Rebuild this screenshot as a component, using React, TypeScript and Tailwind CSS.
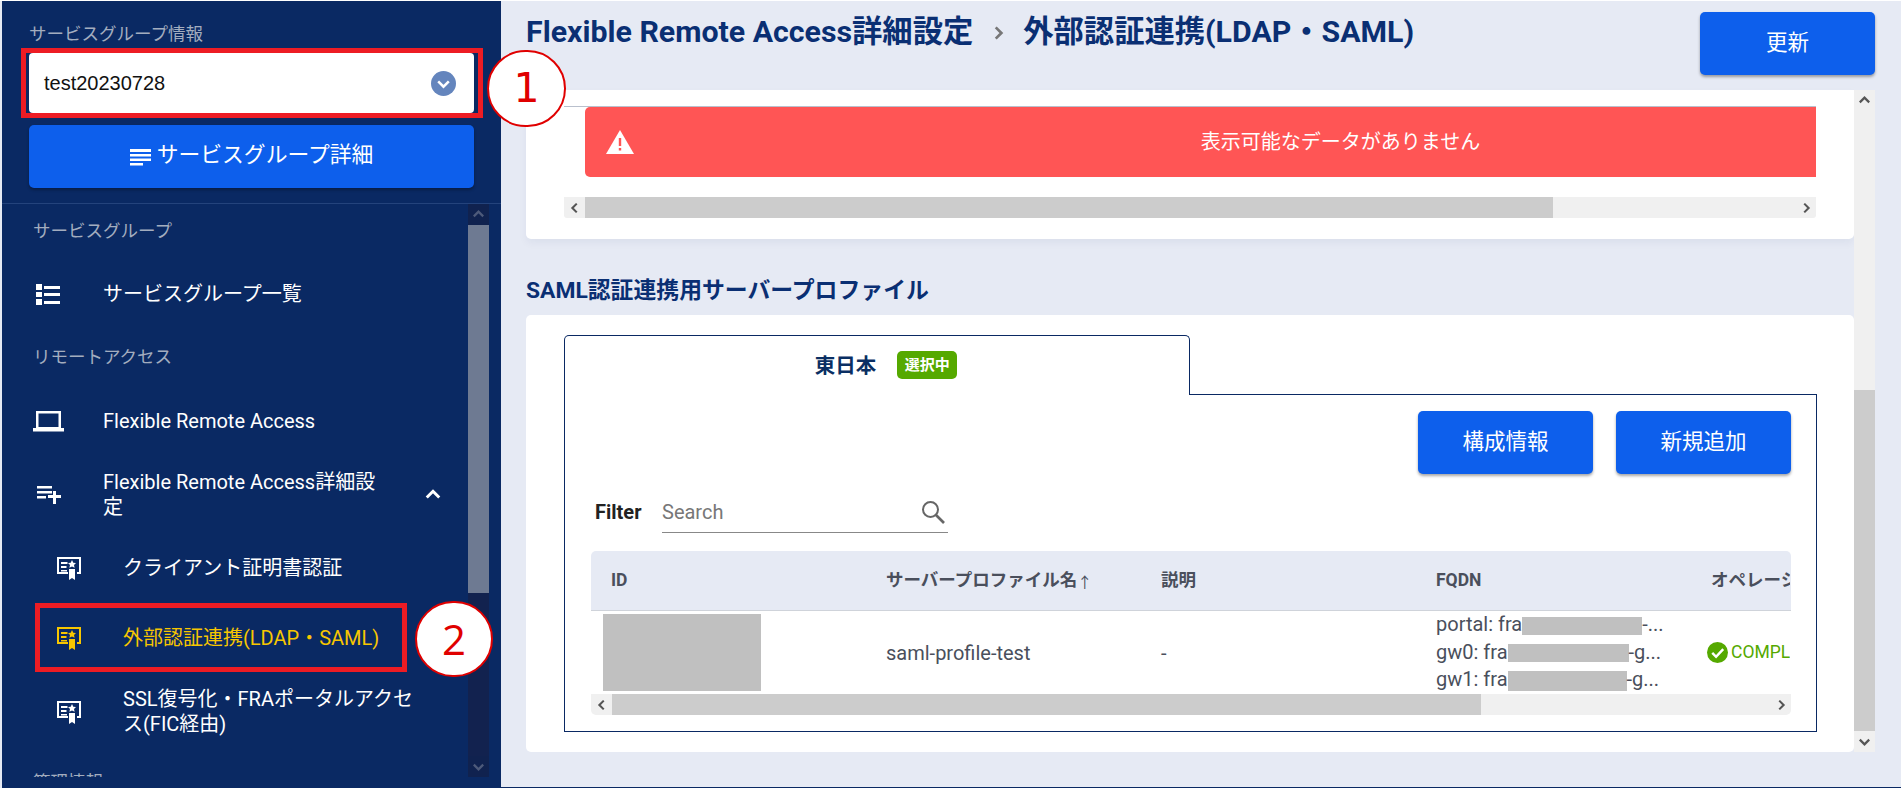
const font = "font-['Roboto','Noto_Sans_CJK_JP',sans-serif]";

const Chevron = ({ dir, className }: { dir: "up" | "down" | "left" | "right"; className: string }) => {
  const d = {
    up: "M3 10 L8 5 L13 10",
    down: "M3 6 L8 11 L13 6",
    left: "M10 3 L5 8 L10 13",
    right: "M6 3 L11 8 L6 13",
  }[dir];
  return (
    <svg viewBox="0 0 16 16" className={className} fill="none" stroke="currentColor" strokeWidth="2.4">
      <path d={d} />
    </svg>
  );
};

const CertIcon = () => (
  <svg viewBox="0 0 26 24" className="w-[26px] h-[24px] shrink-0" fill="currentColor">
    <path d="M1 1h24v17h-4v-2h2V3H3v13h9v2H1z" />
    <path d="M5 6h6.500v2H5zM5 10h5.500v2H5zM5 14h6v1.500H5z" />
    <path d="M16 4l1.300 2.700 2.700.3-2 2 .6 2.800-2.600-1.400-2.600 1.400.6-2.800-2-2 2.700-.3z" />
    <path d="M13 13h6v11l-3-2-3 2z" />
  </svg>
);

const SectionLabel = ({ text, className }: { text: string; className: string }) => (
  <div className={`pl-[31px] text-[17.5px] text-[#a3adbf] ${className}`}>{text}</div>
);

const NavRow = ({
  icon,
  label,
  height,
  indent,
  active,
}: {
  icon: React.ReactNode;
  label: string;
  height: string;
  indent?: boolean;
  active?: boolean;
}) => (
  <div className={`flex items-center text-[20px] leading-[25px] ${height} ${active ? "text-[#f7c600]" : "text-white"}`}>
    <div className={`shrink-0 flex items-center ${indent ? "w-[80px] pl-[54px] mr-[41px]" : "w-[62px] pl-[31px] mr-[39px]"}`}>
      {icon}
    </div>
    <span className={indent ? "w-[295px]" : "w-[285px]"}>{label}</span>
  </div>
);

const VBar = ({
  track,
  thumb,
  btn,
  arrow,
  before,
  size,
}: {
  track: string;
  thumb: string;
  btn: string;
  arrow: string;
  before: string;
  size: string;
}) => (
  <div className={`flex flex-col w-[21px] shrink-0 ${track}`}>
    <div className={`h-[21px] flex items-center justify-center ${btn}`}>
      <Chevron dir="up" className={`w-[15px] h-[15px] ${arrow}`} />
    </div>
    <div className={`${before} shrink-0`} />
    <div className={`${size} ${thumb} shrink-0`} />
    <div className="flex-1" />
    <div className={`h-[21px] flex items-center justify-center ${btn}`}>
      <Chevron dir="down" className={`w-[15px] h-[15px] ${arrow}`} />
    </div>
  </div>
);

const HBar = ({ thumb }: { thumb: string }) => (
  <div className="flex h-[21px] bg-[#f0f0f0] rounded-b-[3px] items-center">
    <div className="w-[21px] flex justify-center text-[#555]">
      <Chevron dir="left" className="w-[14px] h-[14px]" />
    </div>
    <div className={`h-[21px] bg-[#cccccc] ${thumb}`} />
    <div className="flex-1" />
    <div className="w-[21px] flex justify-center text-[#555]">
      <Chevron dir="right" className="w-[14px] h-[14px]" />
    </div>
  </div>
);

const BlueButton = ({ text, className }: { text: string; className: string }) => (
  <button className={`bg-[#0d5fec] text-white text-[21.5px] rounded-[5px] shadow-[0_2px_3px_rgba(0,0,0,0.35)] ${className}`}>
    {text}
  </button>
);

const Redact = ({ w, h }: { w: string; h: string }) => (
  <span className={`inline-block align-middle bg-[#c0c0c0] ${w} ${h}`} />
);

const Sidebar = () => (
  <aside className="w-[499px] ml-[2px] shrink-0 bg-[#0a2963] flex flex-col">
    <div className="h-[203px] border-b border-[#24437c] shrink-0">
      <div className="pl-[27px] pt-[21px] h-[52px] text-[17.5px] leading-[24px] text-[#a3adbf]">サービスグループ情報</div>
      <div className="ml-[27px] w-[445px] h-[60px] bg-white rounded-[4px] flex items-center justify-between pl-[15px] pr-[18px]">
        <span className="font-['Liberation_Sans',sans-serif] text-[20px] text-[#111]">test20230728</span>
        <span className="w-[25px] h-[25px] rounded-full bg-[#6485bd] text-white flex items-center justify-center">
          <Chevron dir="down" className="w-[17px] h-[17px]" />
        </span>
      </div>
      <button className="ml-[27px] mt-[12px] w-[445px] h-[63px] bg-[#0d5fec] rounded-[5px] text-white text-[21.8px] leading-[30px] pb-[3px] flex items-center justify-center gap-[6px] shadow-[0_2px_3px_rgba(0,0,0,0.3)]">
        <svg viewBox="0 0 21 18" className="w-[21px] h-[18px] mt-[3px]" fill="currentColor">
          <path d="M0 1h21v3H0zM0 6h21v2.500H0zM0 10.500h21V13H0zM0 15h13v2.500H0z" />
        </svg>
        サービスグループ詳細
      </button>
    </div>
    <div className="h-[573px] flex overflow-hidden">
      <nav className="w-[466px] shrink-0 overflow-hidden">
        <SectionLabel text="サービスグループ" className="h-[52px] pt-[15px] leading-[24px]" />
        <NavRow
          height="h-[76px]"
          label="サービスグループ一覧"
          icon={
            <svg viewBox="0 0 24 21" className="w-[24px] h-[21px] ml-[3px]" fill="currentColor">
              <path d="M0 0h6v6H0zM8 2h16v3H8zM0 8h6v5H0zM8 9h16v3H8zM0 15h6v6H0zM8 17h16v3H8z" />
            </svg>
          }
        />
        <SectionLabel text="リモートアクセス" className="h-[50px] pt-[13px] leading-[24px]" />
        <NavRow
          height="h-[78px]"
          label="Flexible Remote Access"
          icon={
            <svg viewBox="0 0 31 21" className="w-[31px] h-[21px]" fill="currentColor">
              <path d="M3 0h25v17h3v3.500H0V17h3zM5.500 2.500V16h20V2.500z" />
            </svg>
          }
        />
        <div className="relative">
          <NavRow
            height="h-[70px]"
            label="Flexible Remote Access詳細設定"
            icon={
              <svg viewBox="0 0 24 18" className="w-[24px] h-[18px] ml-[4px]" fill="currentColor">
                <path d="M0 0h15v2.500H0zM0 5h15v2.500H0zM0 10h9v2.500H0zM16 5h3v4h5v3h-5v6h-3v-6h-5V9h5z" />
              </svg>
            }
          />
          <span className="absolute left-[421px] top-[25px] text-white">
            <Chevron dir="up" className="w-[20px] h-[20px]" />
          </span>
        </div>
        <div className="h-[3px]" />
        <NavRow height="h-[70px]" indent label="クライアント証明書認証" icon={<CertIcon />} />
        <NavRow height="h-[70px]" indent active label="外部認証連携(LDAP・SAML)" icon={<CertIcon />} />
        <NavRow height="h-[78px]" indent label="SSL復号化・FRAポータルアクセス(FIC経由)" icon={<CertIcon />} />
        <SectionLabel text="管理情報" className="h-[40px] pt-[19px] leading-[24px]" />
      </nav>
      <VBar
        track="bg-[#12224f]"
        thumb="bg-[#6e7a92]"
        btn="bg-[#10224f]"
        arrow="text-[#4d5a7a]"
        before="h-0"
        size="h-[368px]"
      />
    </div>
  </aside>
);

const Main = () => (
  <main className="flex-1 pl-[25px] flex flex-col border-b border-[#0a2963]">
    <header className="h-[89px] shrink-0 flex justify-between pr-[26px]">
      <h1 className="pt-[14px] text-[30.3px] leading-[34px] font-bold text-[#0a2f73] flex">
        Flexible Remote Access詳細設定
        <Chevron dir="right" className="w-[18px] h-[18px] mx-[16px] mt-[9px] text-[#777]" />
        外部認証連携(LDAP・SAML)
      </h1>
      <BlueButton text="更新" className="w-[175px] h-[63px] mt-[11px]" />
    </header>
    <div className="flex h-[662px]">
      <div className="w-[1328px] shrink-0">
        <section className="h-[149px] bg-white rounded-b-[5px] pl-[38px] pr-[38px] pt-[16px] shadow-[0_4px_8px_rgba(10,41,99,0.05)]">
          <div className="border-t border-[#b9c0cd] overflow-hidden">
            <div className="pl-[21px]">
              <div className="w-[1462px] h-[70px] bg-[#ff5555] rounded-l-[5px] text-white text-[20px] flex items-center relative">
                <svg viewBox="0 0 28 24" className="w-[28px] h-[24px] ml-[21px]">
                  <path d="M14 0 L28 24 H0 Z" fill="#fff" />
                  <path d="M12.800 8h2.400v8h-2.400zM12.800 18h2.400v2.400h-2.400z" fill="#ff5555" />
                </svg>
                <span className="flex-1 text-center">表示可能なデータがありません</span>
              </div>
            </div>
            <div className="h-[20px]" />
          </div>
          <HBar thumb="w-[968px]" />
        </section>
        <h2 className="h-[76px] pt-[37px] text-[22.85px] leading-[30px] font-bold text-[#0a2f73]">
          SAML認証連携用サーバープロファイル
        </h2>
        <section className="h-[437px] bg-white rounded-[5px] pl-[38px] pr-[37px] pt-[20px]">
          <div className="flex h-[60px]">
            <div className="w-[626px] border border-b-0 border-[#0a2963] rounded-t-[5px] flex items-start justify-center pt-[15px] pl-[18px] gap-[21px]">
              <span className="text-[20.5px] leading-[30px] font-bold text-[#0a2f63]">東日本</span>
              <span className="w-[60px] h-[28px] rounded-[5px] bg-[#55a900] text-white text-[15px] font-bold flex items-center justify-center">
                選択中
              </span>
            </div>
            <div className="flex-1 border-b border-[#0a2963]" />
          </div>
          <div className="h-[337px] border border-t-0 border-[#0a2963] pl-[26px] pr-[25px] pt-[16px]">
            <div className="flex justify-end gap-[23px]">
              <BlueButton text="構成情報" className="w-[175px] h-[63px]" />
              <BlueButton text="新規追加" className="w-[175px] h-[63px]" />
            </div>
            <div className="flex items-end mt-[18px] h-[41px] pl-[4px]">
              <span className="text-[20px] font-bold text-[#222] w-[67px] pb-[6px]">Filter</span>
              <div className="w-[286px] h-[41px] border-b border-[#888] flex items-center justify-between pr-[3px] text-[20px] text-[#777]">
                Search
                <svg viewBox="0 0 24 24" className="w-[24px] h-[24px] text-[#666]" fill="none" stroke="currentColor" strokeWidth="2">
                  <circle cx="9.500" cy="9.500" r="7.500" />
                  <path d="M15 15 L23 23" strokeWidth="2.600" />
                </svg>
              </div>
            </div>
            <div className="mt-[18px] rounded-[5px] overflow-hidden relative text-[20px] text-[#4a4f5c]">
              <div className="grid grid-cols-[295px_275px_275px_275px_79px] h-[60px] bg-[#e6eaf4] border-b border-[#cfd3da] items-center font-bold text-[17.5px] whitespace-nowrap overflow-hidden">
                <span className="pl-[20px]">ID</span>
                <span>
                  サーバープロファイル名<span className="font-normal text-[15px] align-[-2px]">↑</span>
                </span>
                <span>説明</span>
                <span>FQDN</span>
                <span className="overflow-hidden">オペレーション</span>
              </div>
              <div className="grid grid-cols-[295px_275px_275px_275px_79px] h-[83px] items-center whitespace-nowrap overflow-hidden">
                <span className="pl-[12px]">
                  <Redact w="w-[158px]" h="h-[77px]" />
                </span>
                <span>saml-profile-test</span>
                <span>-</span>
                <div className="leading-[27.5px]">
                  <div>
                    portal: fra
                    <Redact w="w-[120px]" h="h-[18px]" />
                    -...
                  </div>
                  <div>
                    gw0: fra
                    <Redact w="w-[121px]" h="h-[18px]" />
                    -g...
                  </div>
                  <div>
                    gw1: fra
                    <Redact w="w-[119px]" h="h-[20px]" />
                    -g...
                  </div>
                </div>
                <div className="flex items-center text-[17.5px] text-[#55a900] overflow-hidden -ml-[4px] w-[83px]">
                  <svg viewBox="0 0 22 22" className="w-[21px] h-[21px] shrink-0 mr-[3px]">
                    <circle cx="11" cy="11" r="11" fill="#55a900" />
                    <path d="M5.500 11.500 L9.500 15.500 L17 7.500" fill="none" stroke="#fff" strokeWidth="2.600" />
                  </svg>
                  COMPLETED
                </div>
              </div>
              <HBar thumb="w-[869px]" />
            </div>
          </div>
        </section>
      </div>
      <VBar
        track="bg-[#f0f0f0]"
        thumb="bg-[#cccccc]"
        btn="bg-[#f0f0f0]"
        arrow="text-[#555]"
        before="h-[279px]"
        size="h-[341px]"
      />
    </div>
  </main>
);

export default function App() {
  return (
    <div className={`${font} relative w-[1901px] h-[789px] overflow-hidden bg-white pt-[1px]`}>
      <div className="flex h-[787px] bg-[#e6eaf4]">
        <Sidebar />
        <Main />
      </div>
      {/* annotations drawn on top of the screenshot */}
      <div className="absolute left-[21px] top-[48px] w-[462px] h-[70px] border-[5px] border-[#ed1c24]" />
      <div className="absolute left-[487px] top-[50px] w-[79px] h-[77px] rounded-full bg-white border-2 border-[#e00000] flex items-center justify-center text-[#e00000] text-[41px] leading-none font-['DejaVu_Sans',sans-serif]">
        1
      </div>
      <div className="absolute left-[35px] top-[603px] w-[372px] h-[69px] border-[5px] border-[#ed1c24]" />
      <div className="absolute left-[415px] top-[601px] w-[78px] h-[76px] rounded-full bg-white border-2 border-[#e00000] flex items-center justify-center text-[#e00000] text-[42px] leading-none font-['Open_Sans',sans-serif]">
        2
      </div>
    </div>
  );
}
